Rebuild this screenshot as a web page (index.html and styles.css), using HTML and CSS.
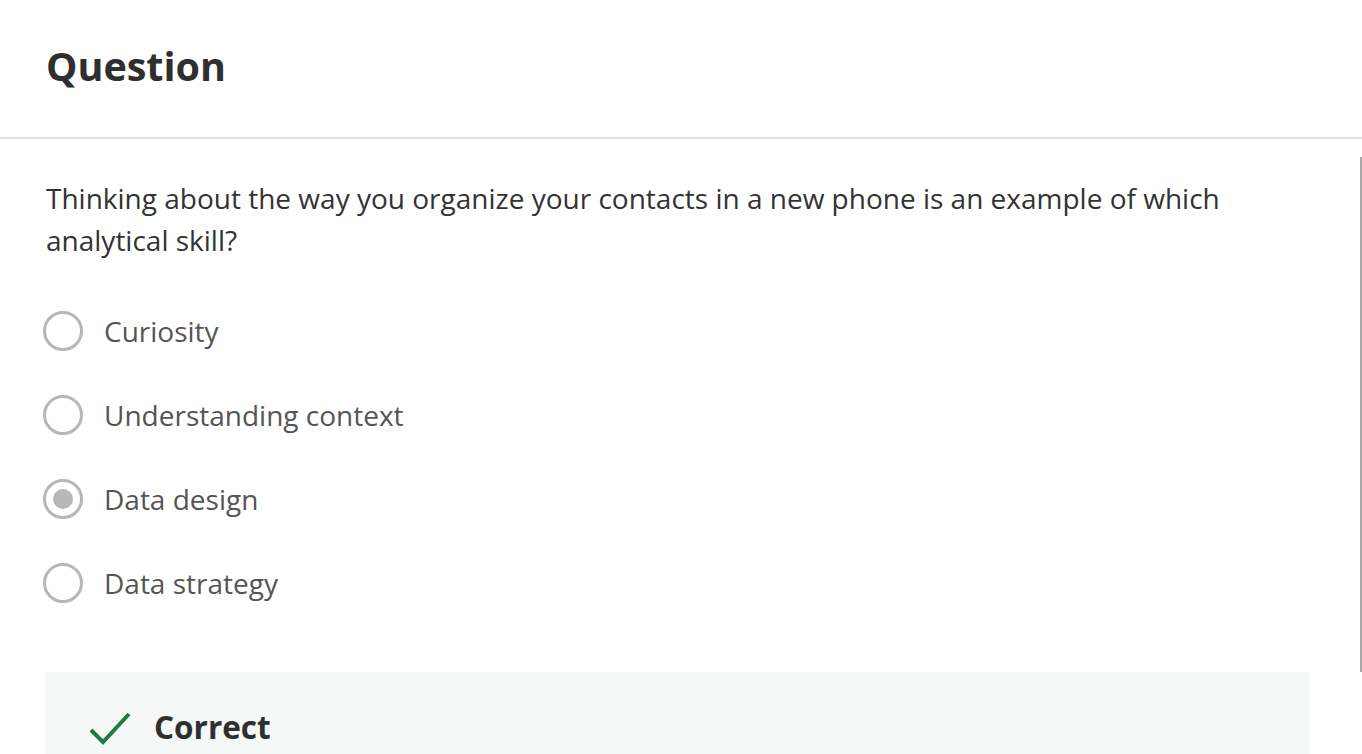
FILE: index.html
```html
<!DOCTYPE html>
<html lang="en">
<head>
<meta charset="utf-8">
<link rel="stylesheet" href="styles.css">
</head>
<body>
<div class="page">
  <header class="header">
    <h1 class="title">Question</h1>
  </header>
  <main class="content">
    <p class="prompt">Thinking about the way you organize your contacts in a new phone is an example of which analytical skill?</p>
    <ul class="options">
      <li class="option"><span class="radio"></span><span class="label">Curiosity</span></li>
      <li class="option"><span class="radio"></span><span class="label">Understanding context</span></li>
      <li class="option"><span class="radio checked"></span><span class="label">Data design</span></li>
      <li class="option"><span class="radio"></span><span class="label">Data strategy</span></li>
    </ul>
    <section class="feedback">
      <svg class="check" width="44" height="34" viewBox="0 0 44 34"><path d="M3 19 L15 31 L41 3" fill="none" stroke="#1f7a47" stroke-width="4"/></svg>
      <span class="feedback-title">Correct</span>
    </section>
  </main>
  <div class="scrollbar"></div>
</div>
</body>
</html>
```

FILE: styles.css
```css
* { box-sizing: border-box; }
html, body { margin: 0; padding: 0; background: #fff; }
body { font-family: "Open Sans", sans-serif; color: #333; overflow: hidden; }
.page { position: relative; width: 1362px; height: 754px; overflow: hidden; }
.header { height: 139px; border-bottom: 2px solid #e1e1e1; padding: 0 46px; display: flex; align-items: flex-start; }
.title { margin: 0; padding-top: 39px; font-size: 39.5px; font-weight: 700; line-height: 54px; color: #2f2f2f; }
.content { padding: 0 53px 0 45px; }
.prompt { margin: 0; padding-top: 38px; font-size: 28px; line-height: 42px; color: #333; padding-left: 1px; }
.options { list-style: none; margin: 50px 0 0; padding: 0; display: flex; flex-direction: column; gap: 44px; }
.option { display: flex; align-items: center; height: 40px; gap: 21px; margin-left: -2px; }
.radio { width: 40px; height: 40px; border-radius: 50%; border: 3px solid #b7b7b7; flex: 0 0 auto; display: flex; align-items: center; justify-content: center; }
.radio.checked::after { content: ""; width: 20px; height: 20px; border-radius: 50%; background: #b7b7b7; }
.label { font-size: 28px; color: #555; line-height: 40px; }
.feedback { margin-top: 69px; height: 110px; background: #f5f8f7; display: flex; align-items: flex-start; padding: 35px 0 0 43px; gap: 22px; width: 1264px; }
.check { margin-top: 4px; }
.feedback-title { font-size: 31.5px; font-weight: 700; color: #2f2f2f; line-height: 40px; }
.scrollbar { position: absolute; right: 0; top: 157px; width: 2px; height: 515px; background: #a9a9a9; }
```
